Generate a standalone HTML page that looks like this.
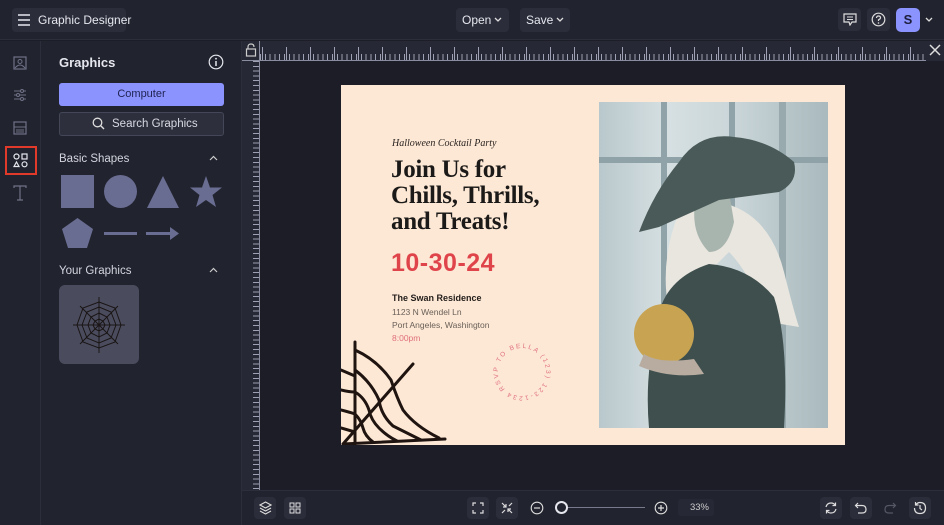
<!DOCTYPE html>
<html><head><meta charset="utf-8"><style>
*{margin:0;padding:0;box-sizing:border-box}
body{width:944px;height:525px;overflow:hidden;background:#1c1d26;font-family:"Liberation Sans",sans-serif;color:#e6e7ee;position:relative}
.abs{position:absolute}
.btn{position:absolute;background:#2b2d3a;border-radius:4px}
.top{left:0;top:0;width:944px;height:40px;background:#21232e;border-bottom:1px solid #2c2e3b}
.rail{left:0;top:41px;width:41px;height:484px;background:#21232e;border-right:1px solid #2c2e3b}
.panel{left:41px;top:41px;width:201px;height:484px;background:#21232e;border-right:1px solid #2c2e3b}
.sh{background:#6a6d92}
.hr{left:260px;top:41px;width:684px;height:20px;background:#262835;border-bottom:1px solid #8a8ca0;
background-image:repeating-linear-gradient(90deg,#9ea0b3 0 1px,transparent 1px 4.8px);background-size:100% 7px;background-position:0 13px;background-repeat:no-repeat}
.hr2{left:262px;top:47px;width:680px;height:13px;background-image:repeating-linear-gradient(90deg,#9ea0b3 0 1px,transparent 1px 24px);background-size:100% 13px;background-repeat:no-repeat}
.vr{left:242px;top:61px;width:18px;height:429px;background:#262835;border-right:1px solid #8a8ca0;
background-image:repeating-linear-gradient(180deg,#9ea0b3 0 1px,transparent 1px 4.8px);background-size:7px 100%;background-position:11px 0;background-repeat:no-repeat}
.bot{left:242px;top:490px;width:702px;height:35px;background:#21232e;border-top:1px solid #2c2e3b}
.ib{position:absolute;width:22px;height:22px;background:#2b2d3a;border-radius:4px}
</style></head><body>
<div class="abs top"></div>
<div class="btn" style="left:12px;top:8px;width:114px;height:24px"></div>
<svg class="abs" style="left:17px;top:13px" width="14" height="14"><path d="M1 2H13M1 7H13M1 12H13" stroke="#e6e7ee" stroke-width="1.5"/></svg>
<div class="abs" style="left:38px;top:13px;font-size:12px">Graphic Designer</div>
<div class="btn" style="left:456px;top:8px;width:53px;height:24px"></div>
<div class="abs" style="left:462px;top:13px;font-size:12px">Open</div>
<svg class="abs" style="left:494px;top:17px" width="8" height="6"><path d="M1 1L4 4L7 1" stroke="#ddd" fill="none" stroke-width="1.3"/></svg>
<div class="btn" style="left:520px;top:8px;width:50px;height:24px"></div>
<div class="abs" style="left:526px;top:13px;font-size:12px">Save</div>
<svg class="abs" style="left:556px;top:17px" width="8" height="6"><path d="M1 1L4 4L7 1" stroke="#ddd" fill="none" stroke-width="1.3"/></svg>
<div class="btn" style="left:838px;top:8px;width:23px;height:23px"></div>
<svg class="abs" style="left:843px;top:13px" width="14" height="13"><path d="M1 1H13V9H9L7 12L6 9H1Z" stroke="#ddd" fill="none" stroke-width="1.2"/><path d="M4 4H10M4 6.5H10" stroke="#ddd"/></svg>
<div class="btn" style="left:867px;top:8px;width:23px;height:23px"></div>
<svg class="abs" style="left:871px;top:12px" width="15" height="15"><circle cx="7.5" cy="7.5" r="6.3" stroke="#ddd" fill="none" stroke-width="1.2"/><path d="M5.5 6Q5.5 4 7.5 4Q9.5 4 9.5 5.8Q9.5 7 7.5 7.8V9" stroke="#ddd" fill="none" stroke-width="1.2"/><circle cx="7.5" cy="11" r=".8" fill="#ddd"/></svg>
<div class="abs" style="left:896px;top:8px;width:24px;height:24px;background:#8b93ff;border-radius:5px;color:#1c1d3a;font-weight:bold;font-size:13px;text-align:center;line-height:24px">S</div>
<svg class="abs" style="left:925px;top:17px" width="8" height="6"><path d="M1 1L4 4L7 1" stroke="#ddd" fill="none" stroke-width="1.3"/></svg>

<div class="abs rail"></div>
<svg class="abs" style="left:13px;top:56px" width="14" height="14"><rect x="1" y="1" width="12" height="12" stroke="#6f7287" fill="none" stroke-width="1.2"/><circle cx="7" cy="5.5" r="2" stroke="#6f7287" fill="none"/><path d="M2 12Q7 6 12 12" stroke="#6f7287" fill="none"/></svg>
<svg class="abs" style="left:13px;top:88px" width="14" height="14"><path d="M1 3H13M1 7H13M1 11H13" stroke="#6f7287"/><circle cx="9" cy="3" r="1.5" fill="#21232e" stroke="#6f7287"/><circle cx="5" cy="7" r="1.5" fill="#21232e" stroke="#6f7287"/><circle cx="9" cy="11" r="1.5" fill="#21232e" stroke="#6f7287"/></svg>
<svg class="abs" style="left:13px;top:121px" width="14" height="14"><rect x="1" y="1" width="12" height="12" stroke="#6f7287" fill="none" stroke-width="1.2"/><path d="M1 6H13M3 9H11M3 11H11" stroke="#6f7287"/></svg>
<div class="abs" style="left:5px;top:146px;width:32px;height:29px;border:2px solid #e23a2a"></div>
<svg class="abs" style="left:13px;top:153px" width="15" height="15"><circle cx="3.5" cy="3.5" r="2.5" stroke="#e6e7ee" fill="none" stroke-width="1.2"/><rect x="9" y="1" width="5" height="5" stroke="#e6e7ee" fill="none" stroke-width="1.2"/><path d="M3.5 9L6 13.5H1Z" stroke="#e6e7ee" fill="none" stroke-width="1.2"/><circle cx="11.5" cy="11.3" r="2.5" stroke="#e6e7ee" fill="none" stroke-width="1.2"/></svg>
<svg class="abs" style="left:13px;top:185px" width="14" height="16"><path d="M1 3V1H13V3M7 1V15M4 15H10" stroke="#6f7287" fill="none" stroke-width="1.2"/></svg>

<div class="abs panel"></div>
<div class="abs" style="left:59px;top:55px;font-size:13px;font-weight:bold">Graphics</div>
<svg class="abs" style="left:208px;top:54px" width="16" height="16"><circle cx="8" cy="8" r="6.8" stroke="#e6e7ee" fill="none" stroke-width="1.2"/><path d="M8 7V12" stroke="#e6e7ee" stroke-width="1.5"/><circle cx="8" cy="4.7" r=".9" fill="#e6e7ee"/></svg>
<div class="abs" style="left:59px;top:83px;width:165px;height:23px;background:#8b93ff;border-radius:3px;color:#1f2250;font-size:11px;text-align:center;line-height:23px">Computer</div>
<div class="abs" style="left:59px;top:112px;width:165px;height:24px;background:#2d2f3c;border:1px solid #444758;border-radius:3px;font-size:11.5px;line-height:22px;padding-left:52px;color:#d8d9e2">Search Graphics</div>
<svg class="abs" style="left:92px;top:117px" width="13" height="13"><circle cx="5.5" cy="5.5" r="4.3" stroke="#ddd" fill="none" stroke-width="1.3"/><path d="M8.5 8.5L12 12" stroke="#ddd" stroke-width="1.4"/></svg>
<div class="abs" style="left:59px;top:153px;font-size:11.5px;color:#d3d4de">Basic Shapes</div>
<svg class="abs" style="left:209px;top:155px" width="9" height="6"><path d="M1 5L4.5 1.5L8 5" stroke="#ccc" fill="none" stroke-width="1.2"/></svg>
<div class="abs sh" style="left:61px;top:175px;width:33px;height:33px"></div>
<div class="abs sh" style="left:104px;top:175px;width:33px;height:33px;border-radius:50%"></div>
<svg class="abs" style="left:146px;top:175px" width="34" height="34"><path d="M17 1L33 33H1Z" fill="#6a6d92"/></svg>
<svg class="abs" style="left:189px;top:175px" width="34" height="34"><path d="M17 1L21 12.5H33L23.5 20L27 32L17 25L7 32L10.5 20L1 12.5H13Z" fill="#6a6d92"/></svg>
<svg class="abs" style="left:61px;top:217px" width="33" height="33"><path d="M16.5 1L32 12L26 31H7L1 12Z" fill="#6a6d92"/></svg>
<div class="abs sh" style="left:104px;top:232px;width:33px;height:3px"></div>
<svg class="abs" style="left:146px;top:226px" width="34" height="15"><path d="M0 7.5H25" stroke="#6a6d92" stroke-width="3"/><path d="M24 1L33 7.5L24 14Z" fill="#6a6d92"/></svg>
<div class="abs" style="left:59px;top:265px;font-size:11.5px;color:#d3d4de">Your Graphics</div>
<svg class="abs" style="left:209px;top:267px" width="9" height="6"><path d="M1 5L4.5 1.5L8 5" stroke="#ccc" fill="none" stroke-width="1.2"/></svg>
<div class="abs" style="left:59px;top:285px;width:80px;height:79px;background:#4a4c5e;border-radius:6px"></div>
<svg class="abs" style="left:71px;top:295px" width="56" height="60"><g stroke="#1a1414" fill="none" stroke-width="1"><path d="M28 2V58M2 30H54M9 11L47 49M47 11L9 49"/><path d="M28 12L40 17L45 30L40 43L28 48L16 43L11 30L16 17Z"/><path d="M28 18L36 22L39 30L36 38L28 42L20 38L17 30L20 22Z"/><path d="M28 24L32 26L34 30L32 34L28 36L24 34L22 30L24 26Z"/><path d="M28 7L44 13L50 30L44 47L28 53L12 47L6 30L12 13Z"/></g></svg>

<div class="abs hr"></div>
<div class="abs hr2"></div>
<div class="abs vr"></div>
<div class="abs" style="left:242px;top:41px;width:18px;height:20px;background:#262835;border-bottom:1px solid #8a8ca0;border-right:1px solid #8a8ca0"></div>
<svg class="abs" style="left:245px;top:43px" width="12" height="14"><path d="M3 6V4Q3 1 6 1Q9 1 9 4" stroke="#ccc" fill="none" stroke-width="1.2"/><rect x="1.5" y="6" width="9" height="7" stroke="#ccc" fill="none" stroke-width="1.2"/></svg>
<div class="abs" style="left:926px;top:41px;width:18px;height:20px;background:#262835"></div>
<svg class="abs" style="left:929px;top:44px" width="12" height="12"><path d="M1 1L11 11M11 1L1 11" stroke="#ddd" stroke-width="1.5"/></svg>

<div class="abs" style="left:341px;top:85px;width:504px;height:360px;background:#fde8d5"></div>
<div class="abs" style="left:392px;top:138px;font-family:'Liberation Serif',serif;font-style:italic;font-size:10px;color:#2a2320">Halloween Cocktail Party</div>
<div class="abs" style="left:391px;top:157px;font-family:'Liberation Serif',serif;font-weight:bold;font-size:25px;line-height:26px;color:#1c1a18;letter-spacing:-0.3px">Join Us for<br>Chills, Thrills,<br>and Treats!</div>
<div class="abs" style="left:391px;top:249px;font-family:'Liberation Sans Narrow','Liberation Sans',sans-serif;font-weight:bold;font-size:25px;color:#e0444b;letter-spacing:0.5px">10-30-24</div>
<div class="abs" style="left:392px;top:293px;font-size:9px;font-weight:bold;color:#221d1a">The Swan Residence</div>
<div class="abs" style="left:392px;top:306px;font-size:8.5px;line-height:13px;color:#6a6058">1123 N Wendel Ln<br>Port Angeles, Washington<br><span style="color:#e0707a">8:00pm</span></div>
<svg class="abs" style="left:488px;top:338px" width="68" height="68"><defs><path id="c" d="M17 51A24 24 0 1 1 51 17A24 24 0 1 1 17 51"/></defs><text font-size="6.5" fill="#e07080" letter-spacing="1.8" font-family="Liberation Sans"><textPath href="#c" startOffset="0">RSVP TO BELLA (123) 123-1234</textPath></text></svg>
<svg class="abs" style="left:341px;top:340px" width="106" height="105"><g stroke="#1f1410" fill="none" stroke-width="3" stroke-linecap="round"><path d="M14 2V104M2 104L104 99M2 104L72 24M0 30L14 36"/>
<path d="M14 30Q30 42 38 60Q40 75 52 86Q66 93 80 100"/>
<path d="M14 52Q24 58 28 70Q30 80 38 88Q46 96 56 101"/>
<path d="M14 74Q20 80 22 88Q24 96 32 102"/>
<path d="M0 50Q8 52 14 52M0 70Q8 72 14 74M0 88L14 92"/>
<path d="M14 10Q36 20 50 40Q56 58 62 70Q74 86 98 98"/></g></svg>

<div class="abs" style="left:599px;top:102px;width:229px;height:326px;background:linear-gradient(90deg,#b9c8cc 0%,#d6e0e2 30%,#c9d5d8 60%,#a9b9bd 100%);overflow:hidden">
<div class="abs" style="left:0;top:55px;width:229px;height:6px;background:#8fa2a8"></div>
<div class="abs" style="left:62px;top:0;width:6px;height:326px;background:#90a3a8"></div>
<div class="abs" style="left:130px;top:0;width:6px;height:120px;background:#90a3a8"></div>
<div class="abs" style="left:180px;top:0;width:7px;height:326px;background:#98aaae"></div>
<svg class="abs" style="left:0;top:0" width="229" height="326"><path d="M70 210Q60 160 80 110L120 100Q170 110 185 170Q195 210 200 225L170 220Q150 170 130 150Z" fill="#e8e6df"/><path d="M97 95Q90 130 110 150Q128 150 135 120L130 90Z" fill="#a8b4ae"/><path d="M40 130Q55 90 80 60Q100 30 135 35Q170 38 195 60Q200 80 180 90L120 98L60 125Z" fill="#4a5a58"/><path d="M60 210Q70 175 110 162Q150 165 175 195Q190 240 185 326H50Q45 270 60 210Z" fill="#3f4f4e"/><ellipse cx="65" cy="232" rx="30" ry="30" fill="#c8a452"/><path d="M45 252Q60 262 95 257L105 272Q70 277 40 264Z" fill="#b8aca0"/></svg>
</div>

<div class="abs bot"></div>
<div class="ib" style="left:254px;top:497px"></div>
<svg class="abs" style="left:259px;top:501px" width="13" height="14"><path d="M6.5 1L12 4L6.5 7L1 4Z M1 7L6.5 10L12 7 M1 10L6.5 13L12 10" stroke="#ddd" fill="none" stroke-width="1.1"/></svg>
<div class="ib" style="left:284px;top:497px"></div>
<svg class="abs" style="left:289px;top:502px" width="12" height="12"><g stroke="#ddd" fill="none"><rect x="1" y="1" width="4" height="4"/><rect x="7" y="1" width="4" height="4"/><rect x="1" y="7" width="4" height="4"/><rect x="7" y="7" width="4" height="4"/></g></svg>
<div class="ib" style="left:467px;top:497px"></div>
<svg class="abs" style="left:472px;top:502px" width="12" height="12"><path d="M1 4V1H4M8 1H11V4M11 8V11H8M4 11H1V8" stroke="#ddd" fill="none" stroke-width="1.2"/></svg>
<div class="ib" style="left:496px;top:497px"></div>
<svg class="abs" style="left:501px;top:502px" width="12" height="12"><path d="M1 1L5 5M5 2V5H2M11 11L7 7M7 10V7H10M11 1L8 4M1 11L4 8" stroke="#ddd" fill="none" stroke-width="1.2"/></svg>
<svg class="abs" style="left:530px;top:501px" width="14" height="14"><circle cx="7" cy="7" r="5.8" stroke="#ddd" fill="none" stroke-width="1.1"/><path d="M4 7H10" stroke="#ddd" stroke-width="1.2"/></svg>
<div class="abs" style="left:561px;top:507px;width:84px;height:1px;background:#777a8a"></div>
<div class="abs" style="left:555px;top:501px;width:13px;height:13px;border:2px solid #e6e7ee;border-radius:50%;background:#21232e"></div>
<svg class="abs" style="left:654px;top:501px" width="14" height="14"><circle cx="7" cy="7" r="5.8" stroke="#ddd" fill="none" stroke-width="1.1"/><path d="M4 7H10M7 4V10" stroke="#ddd" stroke-width="1.2"/></svg>
<div class="abs" style="left:678px;top:499px;width:36px;height:17px;background:#262835;border-radius:3px;font-size:9.5px;color:#ccc;text-align:right;padding-right:5px;line-height:17px">33%</div>
<div class="ib" style="left:820px;top:497px"></div>
<svg class="abs" style="left:824px;top:501px" width="14" height="14"><path d="M2 6Q3 2 7 2Q10 2 11.5 4.5M12 8Q11 12 7 12Q4 12 2.5 9.5M11.5 1.5V4.5H8.5M2.5 12.5V9.5H5.5" stroke="#ddd" fill="none" stroke-width="1.2"/></svg>
<div class="ib" style="left:850px;top:497px"></div>
<svg class="abs" style="left:854px;top:501px" width="14" height="14"><path d="M4 2L1.5 4.5L4 7M1.5 4.5H8Q12 4.5 12 8.5Q12 12 8 12H4" stroke="#ddd" fill="none" stroke-width="1.2"/></svg>
<svg class="abs" style="left:883px;top:501px" width="14" height="14"><path d="M10 2L12.5 4.5L10 7M12.5 4.5H6Q2 4.5 2 8.5Q2 12 6 12H10" stroke="#555866" fill="none" stroke-width="1.2"/></svg>
<div class="ib" style="left:909px;top:497px"></div>
<svg class="abs" style="left:913px;top:501px" width="14" height="14"><path d="M2.5 4Q4.5 1.5 7 1.5Q12.5 1.5 12.5 7Q12.5 12.5 7 12.5Q1.5 12.5 1.5 7M2.5 1V4H5.5M7 4V7.5L9 9" stroke="#ddd" fill="none" stroke-width="1.2"/></svg>
</body></html>
